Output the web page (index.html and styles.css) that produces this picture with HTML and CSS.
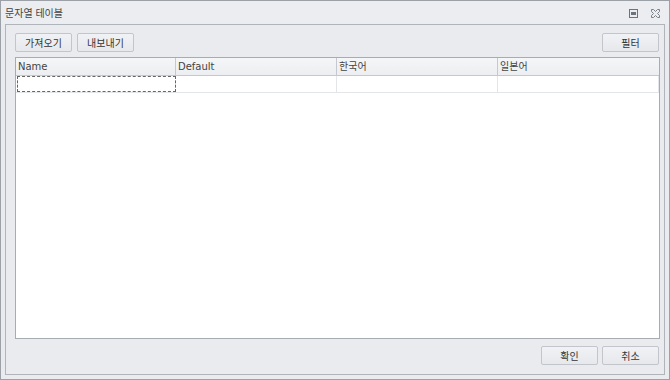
FILE: index.html
```html
<!DOCTYPE html>
<html lang="ko">
<head>
    <meta charset="UTF-8">
    <title>문자열 테이블</title>
    <link rel="stylesheet" href="styles.css">
</head>
<body>
<div class="window">
    <div class="titlebar">
        <span class="title">문자열 테이블</span>
        <span class="controls">
            <svg width="11" height="11" viewBox="0 0 11 11">
                <rect x="1.5" y="1.5" width="8" height="8" fill="none" stroke="#6d737b"/>
                <rect x="3" y="4" width="5" height="3" fill="#6d737b"/>
            </svg>
            <svg width="11" height="11" viewBox="0 0 11 11">
                <path d="M1.5 1.5h2l2 2 2-2h2v2l-2 2 2 2v2h-2l-2-2-2 2h-2v-2l2-2-2-2z" fill="none" stroke="#7a8088"/>
            </svg>
        </span>
    </div>
    <div class="panel">
        <div class="toolbar">
            <button class="btn">가져오기</button>
            <button class="btn">내보내기</button>
            <span class="spacer"></span>
            <button class="btn">필터</button>
        </div>
        <div class="grid">
            <div class="row head">
                <div class="cell">Name</div>
                <div class="cell">Default</div>
                <div class="cell">한국어</div>
                <div class="cell">일본어</div>
            </div>
            <div class="row">
                <div class="cell focus"></div>
                <div class="cell"></div>
                <div class="cell"></div>
                <div class="cell"></div>
            </div>
        </div>
        <div class="footer">
            <button class="btn">확인</button>
            <button class="btn">취소</button>
        </div>
    </div>
</div>
</body>
</html>
```

FILE: styles.css
```css
body {
    margin: 0;
    font-family: "Noto Sans CJK KR", "DejaVu Sans", sans-serif;
    font-size: 10px;
    color: #444;
}
.window {
    width: 670px;
    height: 380px;
    box-sizing: border-box;
    border: 1px solid #9ca1a8;
    background: #e9ebef;
    display: flex;
    flex-direction: column;
}
.titlebar {
    height: 23px;
    display: flex;
    align-items: center;
    padding: 0 8px 0 4px;
    background: #ebedf0;
}
.title {
    flex: 1;
    font-size: 10px;
}
.controls {
    display: flex;
    gap: 11px;
    padding-top: 2px;
}
.panel {
    flex: 1;
    margin: 0 4px 4px 4px;
    border: 1px solid #b0b4bb;
    padding: 8px 5px 9px 9px;
    display: flex;
    flex-direction: column;
    gap: 5px;
}
.toolbar {
    display: flex;
    gap: 5px;
}
.spacer {
    flex: 1;
}
.btn {
    width: 57px;
    height: 19px;
    font: inherit;
    font-size: 10px;
    color: #333;
    border: 1px solid #c2c6cc;
    border-radius: 2px;
    background: linear-gradient(#f1f2f5, #e6e8ec);
    padding: 0;
}
.grid {
    flex: 1;
    width: 645px;
    border: 1px solid #a7abb2;
    background: #fff;
    box-sizing: border-box;
}
.row {
    display: grid;
    grid-template-columns: 160px 161px 161px 1fr;
    height: 16px;
    border-bottom: 1px solid #e3e5e8;
}
.row.head {
    height: 17px;
    background: linear-gradient(#f5f6f8, #eceef1);
    border-bottom: 1px solid #c5c9cf;
}
.cell {
    border-right: 1px solid #e3e5e8;
    padding-left: 2px;
    line-height: 16px;
}
.head .cell {
    border-right: 1px solid #c5c9cf;
    font-family: "DejaVu Sans", "Noto Sans CJK KR", sans-serif;
    line-height: 17px;
}
.head .cell:last-child {
    border-right: none;
}
.cell.focus {
    border: 1px dashed #666;
    margin-left: 1px;
}
.footer {
    display: flex;
    justify-content: flex-end;
    gap: 4px;
    padding-top: 2px;
}
```
